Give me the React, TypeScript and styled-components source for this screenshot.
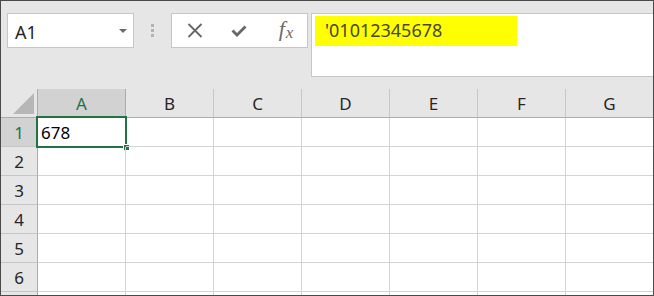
import React from "react";
import styled, { createGlobalStyle } from "styled-components";

const GlobalStyle = createGlobalStyle`
  body {
    margin: 0;
    background: #ffffff;
    font-family: "Noto Sans", "Open Sans", sans-serif;
  }
`;

const columns = ["A", "B", "C", "D", "E", "F", "G"];
// the 7th row only peeks out by a few pixels, so its number stays hidden
const rows = [1, 2, 3, 4, 5, 6, 7];
const visibleRows = 6;
const activeCol = "A";
const activeRow = 1;

export default function App() {
  return (
    <>
      <GlobalStyle />
      <Frame>
        <Toolbar>
          <NameBox>
            <span>A1</span>
            <DropArrow />
          </NameBox>
          <Grip>
            <Dot />
            <Dot />
            <Dot />
          </Grip>
          <FuncBox>
            <FuncButton>
              <svg width="16" height="15" viewBox="0 0 16 15">
                <path d="M1.5 1 L14.5 14 M14.5 1 L1.5 14" stroke="#666666" strokeWidth="1.8" fill="none" />
              </svg>
            </FuncButton>
            <FuncButton>
              <svg width="16" height="12" viewBox="0 0 16 12">
                <path d="M1.5 5.5 L6 10 L14.5 1.5" stroke="#666666" strokeWidth="2.8" fill="none" />
              </svg>
            </FuncButton>
            <FuncButton>
              <Fx>
                f<span>x</span>
              </Fx>
            </FuncButton>
          </FuncBox>
          <FormulaBar>
            <Highlight>'01012345678</Highlight>
          </FormulaBar>
        </Toolbar>
        <Sheet>
          <Corner>
            <svg width="22" height="22" viewBox="0 0 22 22">
              <path d="M21 0 L21 21 L0 21 Z" fill="#b7b7b7" />
            </svg>
          </Corner>
          {columns.map((c) => (
            <ColHeader key={c} $active={c === activeCol}>
              {c}
            </ColHeader>
          ))}
          {rows.map((r) => (
            <React.Fragment key={r}>
              <RowHeader $active={r === activeRow}>{r <= visibleRows ? r : ""}</RowHeader>
              {columns.map((c) => {
                const selected = r === activeRow && c === activeCol;
                return (
                  <Cell key={c}>
                    {selected && "678"}
                    {selected && (
                      <Selection>
                        <FillHandle />
                      </Selection>
                    )}
                  </Cell>
                );
              })}
            </React.Fragment>
          ))}
        </Sheet>
      </Frame>
    </>
  );
}

const Frame = styled.div`
  width: 654px;
  height: 296px;
  box-sizing: border-box;
  border: 1px solid #4a4a4a;
  background: #e6e6e6;
  overflow: hidden;
  display: flex;
  flex-direction: column;
`;

const Toolbar = styled.div`
  height: 88px;
  flex: none;
  box-sizing: border-box;
  padding: 12px 0 0 6px;
  display: flex;
  align-items: flex-start;
`;

const NameBox = styled.div`
  width: 127px;
  height: 35px;
  box-sizing: border-box;
  background: #ffffff;
  border: 1px solid #c6c6c6;
  display: flex;
  align-items: center;
  justify-content: space-between;
  padding: 0 6px 0 7px;
  font-size: 18px;
  color: #262626;

  span {
    margin-top: 2px;
  }
`;

const DropArrow = styled.div`
  width: 0;
  height: 0;
  border-left: 4px solid transparent;
  border-right: 4px solid transparent;
  border-top: 4px solid #6a6a6a;
  margin-top: 1px;
`;

const Grip = styled.div`
  width: 37px;
  height: 35px;
  display: flex;
  flex-direction: column;
  align-items: center;
  justify-content: center;
  gap: 2px;
`;

const Dot = styled.div`
  width: 3px;
  height: 3px;
  background: #b3b3b3;
`;

const FuncBox = styled.div`
  width: 137px;
  height: 35px;
  box-sizing: border-box;
  background: #ffffff;
  border: 1px solid #c6c6c6;
  display: grid;
  grid-template-columns: 44px 44px 1fr;
  align-items: center;
  padding-left: 1px;
`;

const FuncButton = styled.div`
  display: flex;
  align-items: center;
  justify-content: center;
`;

const Fx = styled.span`
  font-family: "Liberation Serif", "DejaVu Serif", serif;
  font-style: italic;
  font-size: 22px;
  line-height: 1;
  color: #6a6a6a;
  margin-left: 4px;
  margin-top: -3px;

  span {
    font-size: 17px;
    position: relative;
    top: 2px;
    margin-left: 1px;
  }
`;

const FormulaBar = styled.div`
  flex: 1;
  margin-left: 3px;
  margin-right: -1px;
  height: 64px;
  box-sizing: border-box;
  background: #ffffff;
  border: 1px solid #c6c6c6;
  padding: 2px 3px;
`;

const Highlight = styled.div`
  width: 202px;
  height: 30px;
  box-sizing: border-box;
  background: #ffff00;
  padding: 2px 0 0 10px;
  font-size: 18px;
  color: #474730;
`;

const Sheet = styled.div`
  flex: 1;
  display: grid;
  grid-template-columns: 37px repeat(7, 88px);
  grid-template-rows: repeat(8, 29px);
  overflow: hidden;
  background: #ffffff;
`;

const Corner = styled.div`
  box-sizing: border-box;
  background: #e6e6e6;
  border-right: 1px solid #ababab;
  border-bottom: 1px solid #ababab;
  display: flex;
  align-items: flex-end;
  justify-content: flex-end;
  padding: 0 2px 2px 0;
`;

const ColHeader = styled.div<{ $active: boolean }>`
  box-sizing: border-box;
  background: ${(p) => (p.$active ? "#d2d2d2" : "#e6e6e6")};
  color: ${(p) => (p.$active ? "#217346" : "#262626")};
  border-right: 1px solid ${(p) => (p.$active ? "#ababab" : "#c6c6c6")};
  border-bottom: 1px solid #ababab;
  display: flex;
  align-items: center;
  justify-content: center;
  font-size: 17px;
  padding-top: 1px;
`;

const RowHeader = styled.div<{ $active: boolean }>`
  box-sizing: border-box;
  background: ${(p) => (p.$active ? "#d2d2d2" : "#e6e6e6")};
  color: ${(p) => (p.$active ? "#217346" : "#262626")};
  border-right: 1px solid #ababab;
  border-bottom: 1px solid #c6c6c6;
  display: flex;
  align-items: center;
  justify-content: center;
  font-size: 17px;
  padding-top: 1px;
`;

const Cell = styled.div`
  position: relative;
  box-sizing: border-box;
  border-right: 1px solid #d4d4d4;
  border-bottom: 1px solid #d4d4d4;
  display: flex;
  align-items: center;
  padding: 1px 0 0 3px;
  font-size: 17px;
  color: #000000;
`;

const Selection = styled.div`
  position: absolute;
  top: -2px;
  left: -2px;
  right: -2px;
  bottom: -2px;
  border: 2px solid #217346;
  pointer-events: none;
`;

const FillHandle = styled.div`
  position: absolute;
  right: -4px;
  bottom: -4px;
  width: 5px;
  height: 5px;
  background: #217346;
  border: 1px solid #ffffff;
  border-right: none;
  border-bottom: none;
`;
